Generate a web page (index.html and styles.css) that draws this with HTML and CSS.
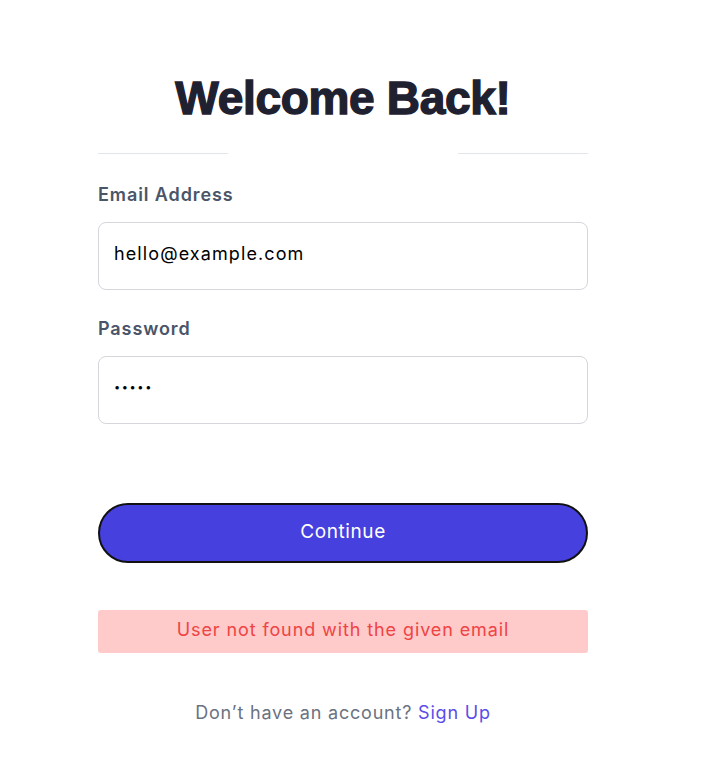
FILE: index.html
```html
<!DOCTYPE html>
<html>
<head>
<meta charset="utf-8">
<link rel="stylesheet" href="styles.css">
</head>
<body>
<main class="page">
  <h1 class="title">Welcome Back!</h1>
  <div class="divider"><span class="line"></span><span class="gap"></span><span class="line"></span></div>
  <form class="form">
    <label class="label" for="email">Email Address</label>
    <input class="input" id="email" type="text" value="hello@example.com">
    <label class="label label-pw" for="pw">Password</label>
    <input class="input input-pw" id="pw" type="password" value="12345">
    <button class="btn" type="button">Continue</button>
  </form>
  <div class="error">User not found with the given email</div>
  <p class="footer">Don’t have an account? <a class="link" href="#">Sign Up</a></p>
</main>
</body>
</html>
```
FILE: styles.css
```css
* { box-sizing: border-box; }
html, body { margin: 0; padding: 0; background: #fff; }
body { font-family: "Inter", "Liberation Sans", sans-serif; }
.page {
  width: 490px;
  margin: 0 0 0 98px;
  padding-top: 70px;
  display: flex;
  flex-direction: column;
}
.title {
  margin: 0;
  text-align: center;
  font-family: "Liberation Sans", Arial, sans-serif;
  font-weight: 700;
  font-size: 46px;
  line-height: 56px;
  letter-spacing: -0.3px;
  color: #1f2130;
  -webkit-text-stroke: 1.4px #1f2130;
}
.divider {
  display: flex;
  align-items: center;
  margin-top: 27px;
  height: 1px;
}
.line { flex: 0 0 130px; height: 1px; background: #e2e5ea; }
.gap { flex: 1; }
.form { display: flex; flex-direction: column; margin-top: 29px; }
.label {
  font-size: 18px;
  font-weight: 600;
  color: #4a5568;
  line-height: 24px;
  letter-spacing: 0.9px;
}
.label-pw { margin-top: 27px; }
.input {
  margin-top: 15px;
  height: 68px;
  width: 100%;
  border: 1px solid #d4d6dc;
  border-radius: 8px;
  padding: 0 15px 5px;
  font-family: "Inter", "Liberation Sans", sans-serif;
  font-size: 18px;
  letter-spacing: 1.1px;
  color: #000;
  outline: none;
  background: #fff;
}
.input-pw {
  font-size: 11px;
  letter-spacing: 1.6px;
  padding-bottom: 6px;
}
.btn {
  margin-top: 79px;
  height: 60px;
  width: 100%;
  border: 2px solid #111;
  border-radius: 30px;
  background: #4540de;
  color: #fff;
  font-family: "Inter", "Liberation Sans", sans-serif;
  font-size: 19px;
  letter-spacing: 0.6px;
  padding-bottom: 5px;
  cursor: pointer;
}
.error {
  margin-top: 47px;
  height: 43px;
  background: #fecaca;
  border-radius: 3px;
  color: #ef4444;
  font-size: 18px;
  letter-spacing: 0.9px;
  padding-bottom: 4px;
  display: flex;
  align-items: center;
  justify-content: center;
}
.footer {
  margin: 49px 0 0;
  text-align: center;
  font-size: 18px;
  letter-spacing: 0.8px;
  color: #6b7280;
}
.link { color: #5b4de8; text-decoration: none; }
```
